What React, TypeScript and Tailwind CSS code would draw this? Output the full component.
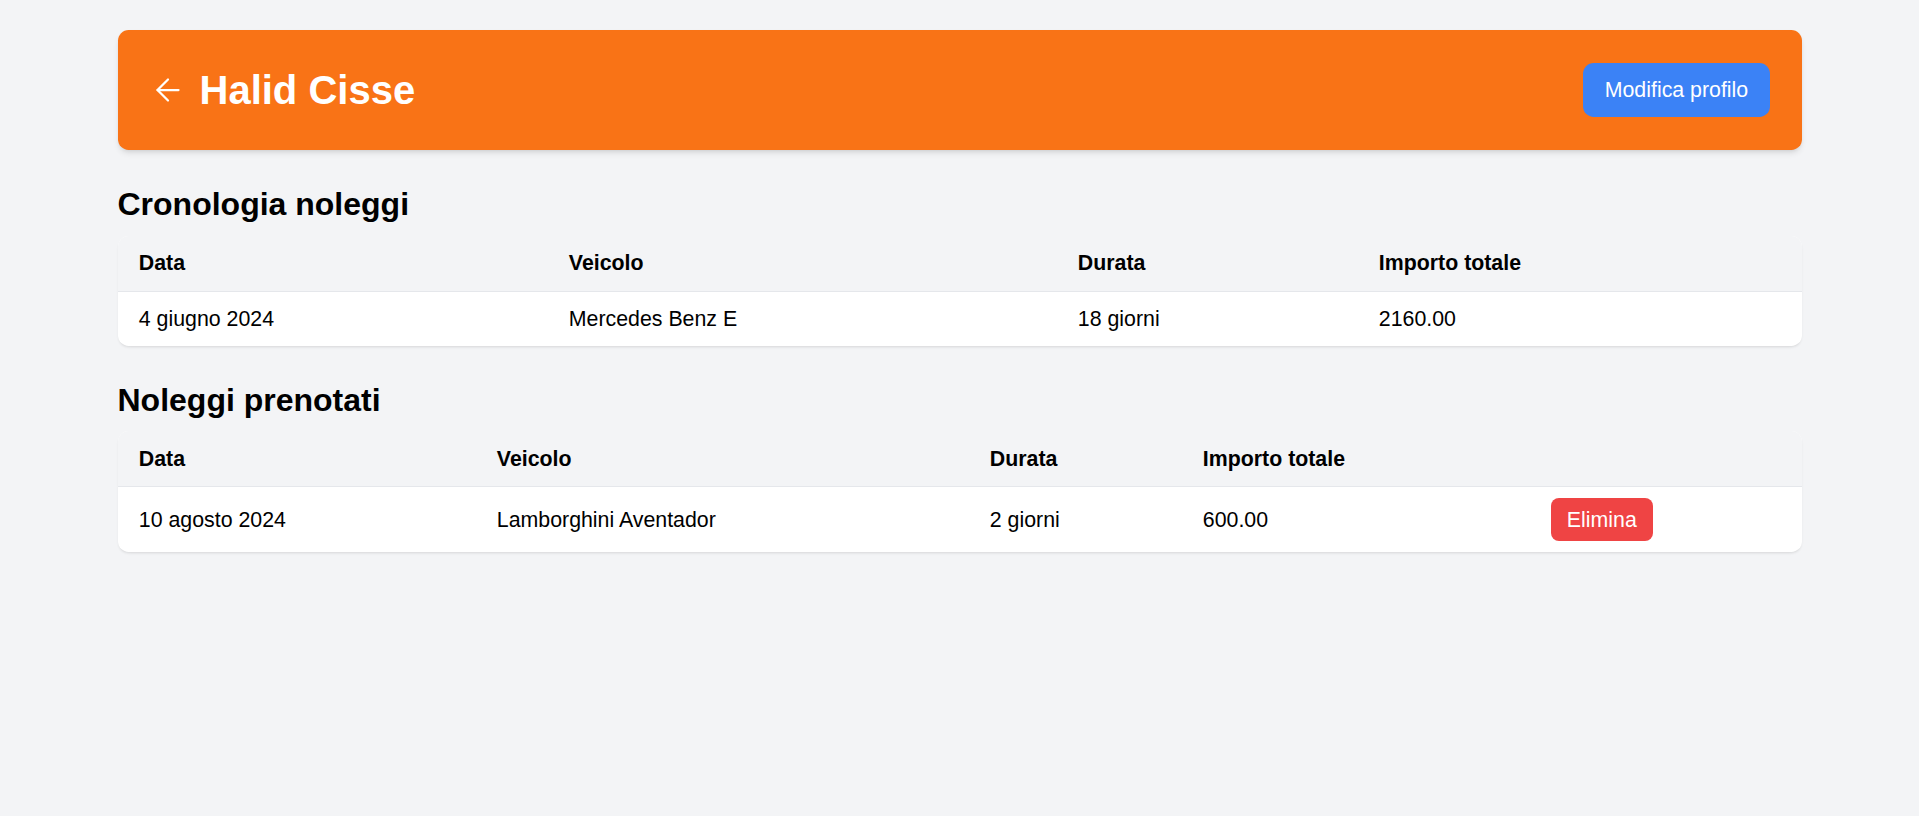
import React from "react";
import { ArrowLeft } from "lucide-react";

type Row = { cells: string[]; action?: boolean };

const Table = ({
  headers,
  widths,
  rows,
}: {
  headers: string[];
  widths: string[];
  rows: Row[];
}) => {
  return (
    <div className="bg-white rounded-[10.67px] shadow-[0_2px_3px_-1px_rgba(0,0,0,0.12)] overflow-hidden">
      <table className="w-full table-fixed text-left text-[21.33px] leading-[32px] text-black">
        <thead className="bg-[#f3f4f6]">
          <tr>
            {headers.map((h, i) => (
              <th
                key={i}
                className={`${widths[i]} px-[21.33px] py-[11.5px] font-bold border-b border-[#e5e7eb]`}
              >
                {h}
              </th>
            ))}
          </tr>
        </thead>
        <tbody>
          {rows.map((r, i) => (
            <tr key={i}>
              {r.cells.map((c, j) => (
                <td key={j} className="px-[21.33px] py-[11px]">
                  {c}
                </td>
              ))}
              {r.action && (
                <td className="px-[21.33px] py-[11px]">
                  <button className="bg-[#ef4444] text-white rounded-[8px] px-[16px] py-[5.33px] leading-[32px]">
                    Elimina
                  </button>
                </td>
              )}
            </tr>
          ))}
        </tbody>
      </table>
    </div>
  );
};

export default function App() {
  return (
    <div className="min-h-screen bg-[#f3f4f6] font-['Liberation_Sans',Arial,sans-serif]">
      <div className="max-w-[1684px] mx-auto pt-[30px]">
        <header className="h-[120px] bg-[#f97316] rounded-[10.67px] shadow-md px-[32px] flex items-center justify-between">
          <div className="flex items-center gap-[14px]">
            <ArrowLeft size={36} strokeWidth={1.5} className="text-white" />
            <h1 className="text-[40px] leading-[48px] font-bold text-white">Halid Cisse</h1>
          </div>
          <button className="bg-[#3b82f6] text-white text-[21.33px] leading-[32px] px-[21.33px] py-[10.67px] rounded-[10.67px]">
            Modifica profilo
          </button>
        </header>

        <section className="mt-[33px]">
          <h2 className="text-[32px] leading-[42.67px] font-bold text-black mb-[10px]">
            Cronologia noleggi
          </h2>
          <Table
            headers={["Data", "Veicolo", "Durata", "Importo totale"]}
            widths={["w-[430px]", "w-[509px]", "w-[301px]", ""]}
            rows={[{ cells: ["4 giugno 2024", "Mercedes Benz E", "18 giorni", "2160.00"] }]}
          />
        </section>

        <section className="mt-[33px]">
          <h2 className="text-[32px] leading-[42.67px] font-bold text-black mb-[10px]">
            Noleggi prenotati
          </h2>
          <Table
            headers={["Data", "Veicolo", "Durata", "Importo totale", ""]}
            widths={["w-[358px]", "w-[493px]", "w-[213px]", "w-[348px]", ""]}
            rows={[
              {
                cells: ["10 agosto 2024", "Lamborghini Aventador", "2 giorni", "600.00"],
                action: true,
              },
            ]}
          />
        </section>
      </div>
    </div>
  );
}
